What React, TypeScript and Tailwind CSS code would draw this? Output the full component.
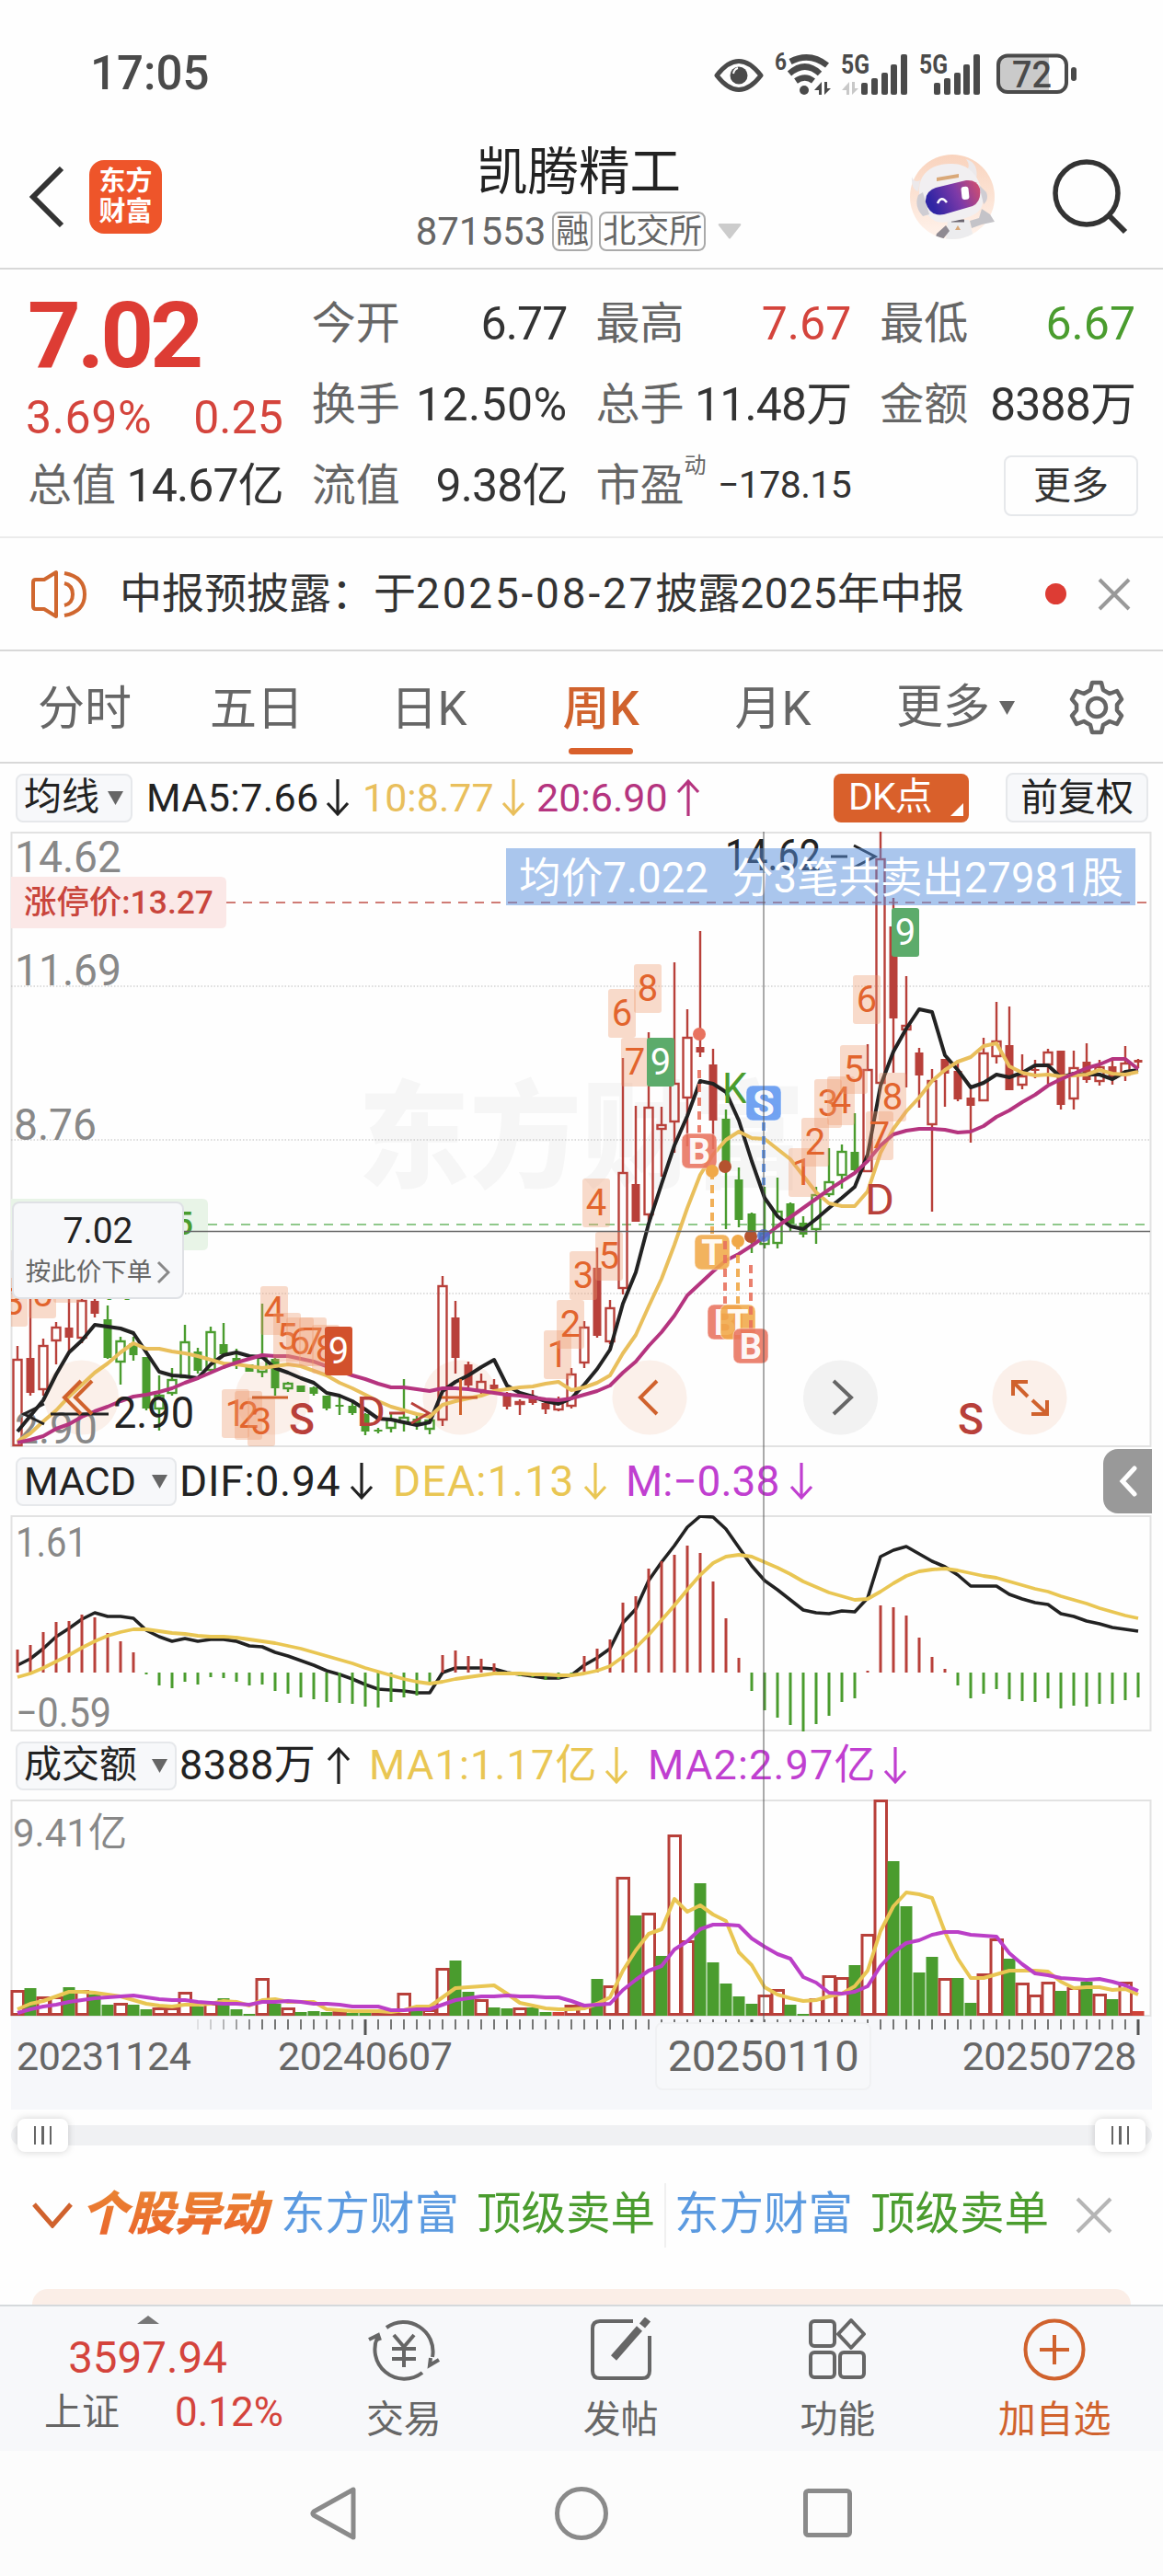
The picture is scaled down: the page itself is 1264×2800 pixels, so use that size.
import { clsx } from "clsx";
import type { ReactNode } from "react";

type CandleKind = "r" | "R" | "g" | "G";
// [high, body top, body bottom, low, kind], lower case kinds are hollow
type Candle = [number, number, number, number, CandleKind];

const RED = "#b8403a";
const GREEN = "#4a9c2e";
const YELLOW = "#e9bf5c";

const xAt = (i: number) => 19 + i * 14;

const CANDLES: Candle[] = [
	[559, 573, 668, 668, "r"], [500, 572, 610, 613, "R"], [551, 558, 607, 613, "r"],
	[533, 538, 554, 579, "r"], [500, 539, 550, 566, "R"], [500, 509, 551, 556, "r"],
	[500, 510, 524, 528, "R"], [515, 530, 572, 573, "G"], [549, 553, 577, 601, "g"],
	[549, 556, 569, 575, "G"], [571, 571, 627, 629, "G"], [591, 612, 628, 651, "g"],
	[583, 595, 611, 613, "g"], [536, 554, 594, 594, "g"], [561, 565, 586, 589, "G"],
	[538, 543, 586, 588, "g"], [534, 557, 568, 569, "G"], [562, 572, 579, 584, "G"],
	[579, 579, 587, 587, "G"], [513, 571, 588, 593, "g"], [571, 573, 605, 613, "G"],
	[598, 599, 606, 609, "g"], [602, 602, 609, 609, "G"], [603, 604, 611, 613, "G"],
	[613, 613, 627, 629, "G"], [614, 623, 624, 634, "G"], [619, 624, 632, 634, "G"],
	[632, 633, 652, 656, "G"], [648, 650, 652, 654, "G"], [633, 638, 649, 653, "g"],
	[595, 636, 643, 652, "g"], [633, 638, 646, 650, "G"], [639, 639, 650, 655, "g"],
	[483, 493, 640, 646, "r"], [510, 528, 572, 589, "R"], [576, 579, 602, 604, "R"],
	[589, 597, 608, 611, "r"], [595, 601, 606, 609, "R"], [609, 610, 625, 628, "R"],
	[617, 619, 623, 634, "r"], [607, 616, 621, 623, "R"], [620, 621, 628, 633, "R"],
	[614, 619, 629, 630, "r"], [583, 589, 625, 627, "r"], [532, 538, 578, 583, "r"],
	[452, 474, 548, 550, "R"], [509, 517, 555, 557, "r"], [246, 370, 497, 503, "r"],
	[298, 383, 424, 424, "R"], [218, 299, 417, 423, "r"], [299, 318, 324, 375, "r"],
	[142, 273, 316, 349, "r"], [193, 223, 290, 342, "r"], [108, 234, 240, 245, "R"],
	[236, 253, 314, 345, "R"], [302, 312, 360, 432, "G"], [365, 378, 422, 430, "G"],
	[414, 415, 446, 458, "G"], [386, 436, 449, 453, "g"], [376, 412, 448, 453, "g"],
	[403, 404, 426, 435, "G"], [418, 425, 438, 441, "G"], [386, 394, 433, 448, "g"],
	[344, 380, 395, 397, "g"], [340, 347, 374, 388, "g"], [306, 348, 368, 369, "G"],
	[231, 258, 370, 370, "r"], [0, 29, 274, 274, "r"], [72, 103, 203, 262, "R"],
	[157, 210, 216, 278, "r"], [235, 240, 265, 300, "R"], [258, 270, 319, 413, "r"],
	[247, 247, 263, 299, "R"], [248, 260, 291, 293, "R"], [280, 289, 298, 338, "R"],
	[224, 240, 293, 293, "r"], [185, 227, 245, 252, "r"], [190, 232, 281, 281, "R"],
	[242, 265, 276, 280, "r"], [248, 258, 260, 268, "R"], [236, 239, 254, 274, "r"],
	[238, 238, 297, 302, "R"], [238, 256, 291, 302, "r"], [230, 250, 270, 273, "R"],
	[248, 255, 272, 276, "r"], [247, 255, 269, 275, "R"], [233, 251, 265, 271, "r"],
	[247, 248, 251, 257, "R"],
];

const MA5 = [
	652, 635, 618, 590, 566, 553, 536, 538, 540, 545, 566, 587, 591, 592, 594, 579,
	569, 566, 570, 571, 583, 588, 594, 599, 610, 613, 619, 628, 638, 639, 642, 645,
	642, 608, 598, 591, 582, 574, 602, 610, 614, 619, 622, 616, 601, 584, 563, 513,
	479, 426, 383, 341, 309, 271, 274, 283, 314, 358, 398, 418, 429, 432, 421, 409,
	398, 386, 351, 276, 239, 214, 193, 196, 243, 259, 278, 273, 264, 267, 262, 254,
	254, 267, 263, 264, 264, 269, 261, 259,
];
const MA10 = [
	663, 654, 641, 629, 614, 601, 588, 578, 566, 556, 562, 562, 565, 567, 570, 574,
	578, 579, 581, 583, 581, 579, 581, 586, 591, 599, 605, 612, 619, 625, 629, 633,
	636, 623, 619, 616, 613, 608, 606, 604, 603, 600, 598, 607, 604, 599, 591, 567,
	547, 516, 486, 449, 409, 373, 351, 335, 326, 333, 334, 345, 356, 374, 392, 404,
	407, 407, 391, 349, 323, 304, 289, 271, 259, 250, 245, 233, 230, 255, 262, 265,
	264, 266, 265, 264, 259, 263, 264, 261,
];
const MA20 = [
	664, 661, 657, 649, 644, 636, 630, 625, 619, 614, 612, 609, 605, 599, 594, 588,
	582, 577, 573, 569, 570, 570, 573, 576, 581, 586, 591, 595, 600, 604, 604, 606,
	608, 605, 605, 606, 608, 610, 612, 613, 615, 617, 618, 616, 612, 608, 602, 588,
	576, 559, 544, 526, 504, 491, 478, 466, 459, 450, 440, 429, 419, 409, 399, 389,
	380, 371, 358, 341, 329, 325, 323, 323, 324, 327, 326, 320, 310, 303, 294, 286,
	276, 269, 263, 257, 253, 247, 247, 258,
];

const MACD_BARS = [
	146, 141, 127, 116, 115, 108, 111, 128, 137, 149, 173, 185, 188, 181, 184, 176,
	177, 181, 185, 184, 191, 194, 198, 200, 203, 204, 205, 208, 209, 203, 198, 196,
	184, 152, 147, 153, 156, 161, 170, 175, 176, 179, 178, 175, 153, 145, 135, 95,
	88, 58, 50, 43, 33, 41, 72, 112, 155, 191, 212, 220, 228, 235, 227, 218, 203,
	199, 169, 98, 100, 109, 133, 154, 167, 185, 199, 194, 189, 200, 202, 203, 199,
	210, 207, 208, 205, 205, 201, 198,
];
const DIF = [
	163, 156, 145, 132, 123, 113, 106, 110, 110, 112, 125, 132, 137, 134, 137, 135,
	135, 137, 142, 143, 149, 153, 158, 163, 169, 173, 178, 184, 189, 190, 191, 193,
	193, 171, 166, 166, 166, 167, 171, 173, 175, 177, 177, 174, 163, 155, 145, 117,
	102, 71, 51, 33, 13, 1, 2, 15, 35, 55, 71, 81, 92, 103, 106, 107, 104, 105, 90,
	45, 38, 34, 42, 50, 56, 65, 77, 77, 77, 86, 91, 95, 97, 107, 110, 115, 118, 122,
	124, 126,
];
const DEA = [
	176, 172, 166, 159, 152, 144, 137, 131, 127, 124, 124, 126, 128, 129, 131, 132,
	132, 133, 135, 137, 139, 142, 145, 149, 153, 157, 161, 166, 170, 174, 178, 181,
	183, 181, 178, 176, 174, 172, 172, 172, 173, 173, 174, 174, 172, 169, 164, 154,
	144, 130, 114, 98, 81, 65, 52, 45, 43, 45, 51, 57, 64, 72, 78, 84, 88, 92, 91,
	83, 74, 66, 61, 59, 58, 60, 63, 66, 68, 72, 76, 80, 83, 88, 92, 96, 101, 105,
	109, 112,
];

const VOLUMES: [number, "r" | "R" | "G"][] = [
	[27, "r"], [30, "G"], [20, "r"], [20, "r"], [31, "G"], [27, "r"], [23, "G"], [12, "G"],
	[13, "r"], [12, "G"], [7, "G"], [8, "r"], [8, "r"], [25, "r"], [10, "G"], [13, "r"],
	[19, "G"], [7, "G"], [2, "G"], [40, "r"], [13, "G"], [8, "r"], [4, "G"], [5, "G"],
	[4, "G"], [4, "r"], [3, "G"], [3, "G"], [4, "r"], [3, "r"], [24, "r"], [5, "G"],
	[6, "r"], [51, "r"], [60, "G"], [26, "G"], [17, "r"], [9, "G"], [8, "G"], [8, "r"],
	[9, "G"], [4, "G"], [4, "R"], [11, "r"], [11, "r"], [40, "G"], [32, "r"], [150, "r"],
	[109, "G"], [111, "r"], [65, "G"], [196, "r"], [81, "r"], [144, "G"], [58, "G"], [35, "G"],
	[21, "G"], [13, "G"], [22, "r"], [28, "r"], [12, "G"], [2, "G"], [18, "r"], [43, "r"],
	[41, "r"], [55, "G"], [88, "r"], [234, "r"], [168, "G"], [119, "G"], [47, "G"], [64, "G"],
	[40, "r"], [41, "G"], [14, "G"], [45, "r"], [83, "r"], [62, "G"], [35, "r"], [22, "r"],
	[36, "r"], [27, "G"], [30, "r"], [37, "G"], [23, "r"], [18, "G"], [36, "r"], [5, "R"],
];
const VOL_MA1 = [
	228, 222, 219, 214, 209, 209, 210, 212, 214, 218, 222, 224, 225, 223, 223, 222,
	219, 220, 224, 218, 217, 220, 220, 220, 228, 229, 230, 230, 230, 231, 229, 225,
	225, 215, 205, 204, 203, 202, 211, 221, 224, 227, 228, 228, 227, 222, 215, 186,
	164, 146, 141, 108, 122, 115, 125, 132, 166, 180, 204, 212, 216, 219, 218, 214,
	211, 203, 186, 143, 116, 101, 103, 107, 144, 173, 194, 194, 190, 186, 186, 186,
	187, 198, 205, 204, 204, 207, 206, 212,
];
const VOL_MA2 = [
	232, 228, 225, 223, 220, 218, 216, 215, 214, 213, 215, 217, 218, 218, 220, 221,
	222, 222, 223, 220, 220, 219, 220, 222, 222, 223, 225, 225, 225, 229, 229, 228,
	228, 223, 218, 216, 214, 214, 213, 214, 214, 215, 215, 219, 224, 223, 222, 207,
	196, 186, 181, 163, 154, 141, 136, 136, 137, 151, 160, 168, 173, 193, 199, 210,
	211, 209, 203, 181, 166, 156, 153, 147, 144, 144, 147, 148, 149, 167, 179, 189,
	191, 194, 195, 196, 195, 198, 202, 208,
];

// nine-turn counters: [x, y, digit, solid background]
const COUNTERS: [number, number, string, string?][] = [
	[0, 485, "3"], [31, 476, "5"], [58, 459, "6"],
	[283, 494, "4"], [297, 523, "5"], [311, 528, "6"], [325, 528, "7"], [339, 536, "8"],
	[353, 538, "9", "#d2512c"],
	[241, 606, "1"], [255, 608, "2"], [269, 615, "3"],
	[591, 542, "1"], [605, 509, "2"], [619, 456, "3"], [633, 377, "4"], [647, 435, "5"],
	[661, 171, "6"], [675, 224, "7"], [689, 144, "8"], [703, 224, "9", "#5cab6b"],
	[857, 344, "1"], [871, 311, "2"], [885, 269, "3"], [899, 266, "4"], [913, 232, "5"],
	[927, 156, "6"], [941, 304, "7"], [955, 262, "8"], [969, 83, "9", "#5cab6b"],
];

const TRADES = [
	{ x: 760, from: 259, to: 327, badge: 347, label: "B", color: "#e8735f" },
	{ x: 774, from: 369, to: 437, badge: 457, label: "T", color: "#f0a848" },
	{ x: 788, from: 445, to: 513, badge: 533, label: "B", color: "#e8735f" },
	{ x: 802, from: 445, to: 513, badge: 533, label: "T", color: "#f0a848" },
	{ x: 816, from: 471, to: 540, badge: 559, label: "B", color: "#e8735f" },
	{ x: 830, from: 316, to: 384, badge: 295, label: "S", color: "#5f96f0" },
];

function Series({ data, color, width = 4 }: { data: number[]; color: string; width?: number }) {
	return (
		<polyline
			points={data.map((y, i) => `${xAt(i)},${y}`).join(" ")}
			fill="none"
			stroke={color}
			strokeWidth={width}
			strokeLinejoin="round"
		/>
	);
}

function Label({
	x,
	y,
	w,
	size,
	color,
	weight = 400,
	children,
}: {
	x: number;
	y: number;
	w?: number;
	size: number;
	color: string;
	weight?: number;
	children: string;
}) {
	return (
		<text
			x={x}
			y={y}
			fill={color}
			fontSize={size}
			fontWeight={weight}
			textLength={w}
			lengthAdjust="spacingAndGlyphs"
			xmlSpace="preserve"
		>
			{children}
		</text>
	);
}

function CandleShape({ i, candle }: { i: number; candle: Candle }) {
	const [high, top, bottom, low, kind] = candle;
	const x = xAt(i);
	const color = kind.toLowerCase() === "r" ? RED : GREEN;
	const hollow = kind === "r" || kind === "g";
	return (
		<g stroke={color} strokeWidth="2.4">
			<path d={`M${x} ${high}V${top}M${x} ${bottom}V${low}`} />
			{hollow ? (
				<rect x={x - 4.5} y={top + 1} width="9" height={Math.max(bottom - top - 2, 1)} fill="none" />
			) : (
				<rect x={x - 4.5} y={top} width="9" height={Math.max(bottom - top, 2)} fill={color} stroke="none" />
			)}
		</g>
	);
}

function Arrow({ up, className }: { up?: boolean; className?: string }) {
	return (
		<svg viewBox="0 0 26 42" className={clsx("h-[42px] w-[26px] shrink-0", up && "rotate-180", className)}>
			<path d="M13 1v38M2 27l11 12 11-12" fill="none" stroke="currentColor" strokeWidth="3.2" />
		</svg>
	);
}

function Reading({ children, up, className }: { children: string; up?: boolean; className: string }) {
	return (
		<div className={clsx("flex shrink-0 items-center justify-between", className)}>
			<span className="whitespace-nowrap">{children}</span>
			<Arrow up={up} />
		</div>
	);
}

function Picker({ children, className }: { children: string; className?: string }) {
	return (
		<button
			type="button"
			className={clsx(
				"ml-[17px] flex h-[53px] shrink-0 items-center justify-between rounded-lg border-2 border-[#e6e8eb] bg-[#f7f8fa] pr-2 pl-[7px] whitespace-nowrap text-[#222]",
				className,
			)}
		>
			{children}
			<svg viewBox="0 0 17 15" className="h-[15px] w-[17px]">
				<path d="M0 0h17L8.500 15z" fill="#666" />
			</svg>
		</button>
	);
}

function StatusBar() {
	return (
		<div className="flex h-[150px] items-start justify-between pt-[52px] pr-[92px] pl-[98px] text-[#4a4a4a]">
			<span className="text-[51px] leading-[56px] font-medium">17:05</span>
			<svg viewBox="776 50 396 56" className="h-[56px] w-[396px]" fill="#4a4a4a">
				<path d="M779 80q24-31 48 0q-24 31-48 0z" fill="none" stroke="#4a4a4a" strokeWidth="5" strokeLinejoin="round" />
				<circle cx="803" cy="80" r="9.500" />
				<path d="M797 78q1-5 5-6" stroke="#fff" strokeWidth="2" fill="none" />
				<text x="842" y="74" fontSize="25" fontWeight="700" textLength="13" lengthAdjust="spacingAndGlyphs">6</text>
				<g fill="none" stroke="#4a4a4a" strokeWidth="6.500">
					<path d="M859 65q21-11 40 4" />
					<path d="M858 78q17-15 33 0" />
					<path d="M865 86q10-7 19 0" />
				</g>
				<circle cx="874" cy="96" r="5" />
				<path d="M885 96l8-9v14h-3v-5zM896 87v14l7-7h-4v-7z" />
				<text x="914" y="78" fontSize="29" fontWeight="700" textLength="31" lengthAdjust="spacingAndGlyphs">5G</text>
				<path d="M915 96l8-9v14h-3v-5zM926 87v14l7-7h-4v-7z" fill="#c8c8c8" />
				<rect x="936" y="88" width="7" height="13" rx="2" />
				<rect x="947" y="83" width="7" height="18" rx="2" />
				<rect x="958" y="77" width="7" height="24" rx="2" />
				<rect x="968" y="68" width="7" height="33" rx="2" />
				<rect x="979" y="57" width="7" height="44" rx="2" />
				<text x="999" y="78" fontSize="29" fontWeight="700" textLength="31" lengthAdjust="spacingAndGlyphs">5G</text>
				<rect x="1015" y="88" width="7" height="13" rx="2" />
				<rect x="1026" y="83" width="7" height="18" rx="2" />
				<rect x="1037" y="77" width="7" height="24" rx="2" />
				<rect x="1047" y="68" width="7" height="33" rx="2" />
				<rect x="1058" y="57" width="7" height="44" rx="2" />
				<path d="M1093 58h47v40h-47q-10 0-10-10V68q0-10 10-10z" fill="#cacaca" />
				<rect x="1085" y="58.500" width="74" height="39.500" rx="10" fill="none" stroke="#4a4a4a" strokeWidth="4" />
				<rect x="1164" y="71" width="6" height="15" rx="3" />
				<text x="1100" y="93" fontSize="40" fontWeight="500" textLength="43" lengthAdjust="spacingAndGlyphs">72</text>
			</svg>
		</div>
	);
}

function Assistant() {
	return (
		<svg viewBox="0 0 94 94" className="h-[94px] w-[94px]">
			<defs>
				<linearGradient id="halo" x1="0" y1="0" x2="0" y2="1">
					<stop offset="0" stopColor="#f9d3bd" />
					<stop offset="1" stopColor="#fff3ec" />
				</linearGradient>
				<linearGradient id="visor" x1="0" y1="0.3" x2="1" y2="0">
					<stop offset="0" stopColor="#2f25a4" />
					<stop offset="0.5" stopColor="#7d3aa8" />
					<stop offset="1" stopColor="#d9506a" />
				</linearGradient>
				<clipPath id="halo-clip">
					<path d="M1 47a46 46 0 0 1 92 0 46 46 0 0 1-92 0z" />
				</clipPath>
			</defs>
			<circle cx="47" cy="47" r="46" fill="url(#halo)" />
			<g clipPath="url(#halo-clip)">
				<path d="M42 72h23l6 22H40z" fill="#ececee" />
				<path d="M40 78l-10 9-2 7h8l8-10z" fill="#8f8a92" />
				<path d="M46 73h14" stroke="#6b6670" strokeWidth="3" />
				<path d="M50 83l3-5 3 5z" fill="#d9a878" />
			</g>
			<path d="M66 73l10-3 3-10 9 6 5 8-14 3-11 4z" fill="#c4c3c8" />
			<path d="M3 25q2 7 9 4l-2 12q-8-2-7-16zM62 6q14 4 11 22l-12-8q7-6 1-14z" fill="#ece9eb" />
			<path d="M11 38C12 18 30 10 47 11c17 0 28 12 32 29 4 16-1 24-12 28-13 5-32 9-39 5-10-5-18-20-17-35z" fill="#f1eff1" />
			<path d="M10 45q-5 12 5 23l7-2-7-24zM76 34l8 8q3 8-3 13z" fill="#cfcdd3" />
			<path d="M18 53q-1-12 11-16l33-8q12-1 15 9 2 14-8 19L38 66q-15 3-20-13z" fill="url(#visor)" />
			<path d="M31 54q4-9 10-1" stroke="#fff" strokeWidth="2.500" fill="none" />
			<rect x="57" y="36" width="8" height="14" rx="3" fill="#fff" transform="rotate(-6 60 43)" />
			<path d="M30 26l24-4v4l-24 4z" fill="#d9a878" />
		</svg>
	);
}

function Header() {
	return (
		<header className="flex h-[143px] items-center justify-between border-b-2 border-[#d8d8d8] pr-[38px] pb-[14px] pl-[30px]">
			<div className="flex w-[290px] items-center gap-[25px]">
				<svg viewBox="0 0 42 66" className="h-[66px] w-[42px]">
					<path d="M37 2L6 33l31 31" fill="none" stroke="#333" strokeWidth="6" />
				</svg>
				<div className="flex h-[80px] w-[79px] flex-col items-center justify-center rounded-2xl bg-[#ee552a] text-[29px] leading-[33px] font-bold text-white">
					<span>东方</span>
					<span>财富</span>
				</div>
			</div>
			<div className="flex flex-col items-center pt-[9px] pl-[2px]">
				<h1 className="text-[55.500px] leading-[65px] text-[#222]">凯腾精工</h1>
				<div className="flex h-[62px] items-center pt-[2px] text-[#666]">
					<span className="text-[42px]">871553</span>
					<span className="ml-[7px] flex h-[43px] items-center rounded-lg border-2 border-[#aaa] px-[2px] text-[36px]">融</span>
					<span className="ml-[7px] flex h-[43px] items-center rounded-lg border-2 border-[#aaa] px-[2px] text-[36px]">北交所</span>
					<svg viewBox="0 0 26 17" className="ml-[13px] h-[17px] w-[26px]">
						<path d="M2 0h22q2 0 1 2L14 16q-1 1-2 0L1 2q-1-2 1-2z" fill="#ccc" />
					</svg>
				</div>
			</div>
			<div className="flex w-[290px] items-center justify-end gap-[62px]">
				<Assistant />
				<svg viewBox="0 0 82 82" className="h-[82px] w-[82px]">
					<circle cx="37" cy="37" r="34" fill="none" stroke="#333" strokeWidth="5.500" />
					<path d="M61 61l18 18" stroke="#333" strokeWidth="6" />
				</svg>
			</div>
		</header>
	);
}

function Stat({
	label,
	value,
	className = "tracking-[-0.9px] text-[#333]",
}: {
	label: string;
	value: string;
	className?: string;
}) {
	return (
		<div className="flex h-[88px] items-center justify-between whitespace-nowrap">
			<span className="text-[48px] text-[#666]">{label}</span>
			<span className={clsx("text-[50px]", className)}>{value}</span>
		</div>
	);
}

function Quote() {
	return (
		<section className="grid h-[292px] grid-cols-4 content-start gap-x-[31px] border-b-2 border-[#ebebeb] px-[30px] pt-[15px]">
			<div className="row-span-2 flex flex-col">
				<span className="mt-[8px] text-[101px] leading-[98px] font-bold tracking-[-4px] text-[#dd3c34]">7.02</span>
				<div className="mt-[12px] -ml-[2px] flex justify-between text-[50px] leading-[56px] text-[#d4443c]">
					<span className="tracking-[0.6px]">3.69%</span>
					<span>0.25</span>
				</div>
			</div>
			<Stat label="今开" value="6.77" />
			<Stat label="最高" value="7.67" className="text-[#d4443c]" />
			<Stat label="最低" value="6.67" className="text-[#4a9c2e]" />
			<Stat label="换手" value="12.50%" className="tracking-[0.4px] text-[#333]" />
			<Stat label="总手" value="11.48万" />
			<Stat label="金额" value="8388万" />
			<Stat label="总值" value="14.67亿" />
			<Stat label="流值" value="9.38亿" />
			<div className="flex h-[88px] items-center whitespace-nowrap text-[#666]">
				<span className="text-[48px]">市盈</span>
				<span className="mb-[44px] text-[24px]">动</span>
				<span className="ml-auto text-[41px] tracking-[-0.6px] text-[#333]">−178.15</span>
			</div>
			<div className="flex h-[88px] items-center justify-end">
				<button
					type="button"
					className="mr-[-3px] h-[66px] w-[146px] rounded-lg border-2 border-[#e6e8eb] text-[41px] leading-none text-[#333]"
				>
					更多
				</button>
			</div>
		</section>
	);
}

function Notice() {
	return (
		<section className="flex h-[123px] items-center border-b-2 border-[#d8d8d8] pl-[33px]">
			<svg viewBox="0 0 62 54" className="h-[54px] w-[62px]" fill="none" stroke="#d0672f" strokeWidth="4">
				<path d="M3 14q0-3 3-3h9L28 3v48L15 43H6q-3 0-3-3z" strokeLinejoin="round" />
				<path d="M37 15q9 2 9 12t-9 12M37 4q22 4 22 23T37 50" />
			</svg>
			<p className="ml-[35px] w-[924px] text-[46px] whitespace-nowrap text-[#333]">
				中报预披露：于<span className="tracking-[2.800px]">2025-08-27</span>披露
				<span className="tracking-[0.6px]">2025</span>年中报
			</p>
			<span className="ml-[82px] size-[23px] rounded-full bg-[#dd3c34]" />
			<svg viewBox="0 0 36 36" className="ml-[34px] size-[36px]">
				<path d="M2 2l32 32M34 2L2 34" stroke="#999" strokeWidth="4" />
			</svg>
		</section>
	);
}

const TABS = ["分时", "五日", "日K", "周K", "月K"];

function Tabs() {
	return (
		<nav className="flex h-[122px] border-b-2 border-[#d8d8d8] text-[51px] text-[#666]">
			{TABS.map((tab) => (
				<div
					key={tab}
					className={clsx("flex w-[187px] flex-col items-center pr-[3px]", tab === "周K" && "font-medium text-[#d0622d]")}
				>
					<span className="mt-[28px] leading-[70px]">{tab}</span>
					{tab === "周K" && <span className="mt-[7px] h-[7px] w-[70px] rounded-full bg-[#d9602b]" />}
				</div>
			))}
			<div className="flex h-[122px] w-[210px] items-center justify-center gap-[10px] pr-[3px]">
				<span>更多</span>
				<svg viewBox="0 0 17 15" className="h-[15px] w-[17px]">
					<path d="M0 0h17L8.500 15z" fill="#666" />
				</svg>
			</div>
			<div className="flex h-[122px] w-[94px] items-center justify-center">
				<svg viewBox="0 0 60 60" className="size-[60px]" fill="none" stroke="#666" strokeWidth="4.500" strokeLinejoin="round">
					<path d="M25 3h10l2 8 7 4 8-3 5 9-5 6v6l5 6-5 9-8-3-7 4-2 8H25l-2-8-7-4-8 3-5-9 5-6v-6l-5-6 5-9 8 3 7-4z" />
					<circle cx="30" cy="30" r="10" />
				</svg>
			</div>
		</nav>
	);
}

function MainChart() {
	return (
		<div className="relative h-[669px]">
			<svg viewBox="0 0 1264 669" className="h-[669px] w-[1264px]">
				<defs>
					<clipPath id="main-clip">
						<rect x="12" y="0" width="1240" height="669" />
					</clipPath>
				</defs>
				<Label x={389} y={377} w={486} size={126} color="#f6f6f6" weight={900}>东方财富</Label>
				<rect x="12.500" y="1" width="1238" height="667" fill="none" stroke="#e2e2e2" strokeWidth="2" />
				{[168, 335, 502].map((y) => (
					<path key={y} d={`M12 ${y}H1250`} stroke="#bbb" strokeWidth="1.200" strokeDasharray="1.500 2" />
				))}
				<Label x={16} y={44} w={116} size={48} color="#888">14.62</Label>
				<Label x={16} y={167} w={116} size={48} color="#888">11.69</Label>
				<Label x={15} y={335} w={90} size={48} color="#888">8.76</Label>
				<path d="M12 49h228q6 0 6 6v44q0 6-6 6H12z" fill="#fbe8e7" />
				<Label x={26} y={89} w={206} size={35} color="#c9453c" weight={500}>涨停价:13.27</Label>
				<path d="M246 77H1247" stroke="#cf7b75" strokeWidth="2.200" strokeDasharray="10 8" />
				<path d="M12 399h208q6 0 6 6v44q0 6-6 6H12z" fill="#e8f4e7" />
				<Label x={190} y={438} w={20} size={35} color={GREEN} weight={500}>5</Label>
				<path d="M226 427H1247" stroke="#8fc88b" strokeWidth="2.200" strokeDasharray="10 8" />

				{[88.5, 296, 500, 706, 913.5, 1119].map((cx) => (
					<circle key={cx} cx={cx} cy="615" r="40.500" fill={cx === 913.5 ? "#f2f2f2" : "#fbf0ea"} />
				))}

				<g clipPath="url(#main-clip)">
					{CANDLES.map((candle, i) => (
						<CandleShape key={i} i={i} candle={candle} />
					))}
					<Label x={16} y={665} w={90} size={48} color="#888">2.90</Label>
					<Label x={788} y={42} w={104} size={48} color="#222">14.62</Label>
					<path d="M903 27h18M928 15l23 12-23 12" fill="none" stroke="#222" strokeWidth="3" />
					<Series data={MA5} color="#222" />
					<Series data={MA10} color={YELLOW} />
					<Series data={MA20} color="#b5347f" />

					{COUNTERS.map(([x, y, digit, solid]) => (
						<g key={`${x}-${y}`}>
							<rect x={x} y={y} width="30" height="53" rx="3" fill={solid ?? "#ee9c70"} fillOpacity={solid ? 1 : 0.36} />
							<text x={x + 15} y={y + 40} textAnchor="middle" fontSize="40" fill={solid ? "#fff" : "#e2642d"}>
								{digit}
							</text>
						</g>
					))}
				</g>

				<Label x={113} y={509} w={28} size={47} color={GREEN}>K</Label>
				<Label x={785} y={295} w={27} size={47} color={GREEN}>K</Label>
				<Label x={940} y={416} w={32} size={46} color={RED}>D</Label>
				<Label x={387} y={646} w={32} size={44} color={RED}>D</Label>
				<path d="M423 632h17M447 621l19 11-19 11" fill="none" stroke={RED} strokeWidth="3" />
				<Label x={314} y={655} w={28} size={48} color={RED} weight={500}>S</Label>
				<Label x={1041} y={655} w={28} size={48} color={RED} weight={500}>S</Label>
				<Label x={123} y={648} w={88} size={48} color="#222">2.90</Label>
				<path d="M55 633h63M48 622l-22 11 22 11" fill="none" stroke="#222" strokeWidth="3" />

				<g fill="none" stroke="#d0622d" strokeWidth="4">
					<path d="M88 597L70 615l18 18M100 597L82 615l18 18" />
					<path d="M274 615h39M480 615h39M500.500 595v39" strokeWidth="3" />
					<path d="M714 597l-18 18 18 18" />
					<path d="M1101 613v-15h16M1102 599l15 15M1121 633h17v-15M1137 632l-15-14" />
					<path d="M906 597l19 18-19 18" stroke="#666" />
				</g>

				{TRADES.map((t) => (
					<g key={t.x}>
						<path d={`M${t.x} ${t.from}V${t.to}`} stroke={t.color} strokeWidth="4" strokeDasharray="9 6" opacity="0.9" />
						<rect
							x={t.x - 19}
							y={t.badge - 19}
							width="38"
							height="38"
							rx="7"
							fill={t.color}
							fillOpacity="0.88"
							stroke="#fff"
							strokeOpacity="0.5"
						/>
						<text x={t.x} y={t.badge + 14} textAnchor="middle" fontSize="38" fontWeight="700" fill="#fff" fillOpacity="0.95">
							{t.label}
						</text>
					</g>
				))}
				<circle cx="760" cy="220" r="7" fill="#e8735f" />
				<circle cx="774" cy="369" r="7" fill="#f0a848" />
				<circle cx="788" cy="364" r="7" fill="#b4532f" />
				<circle cx="802" cy="445" r="7" fill="#f0a848" />
				<circle cx="816" cy="440" r="7" fill="#b4532f" />
				<circle cx="830" cy="439" r="7" fill="#4a70d0" fillOpacity="0.85" />

				<path d="M199 434.500H1250" stroke="#666" strokeWidth="1.500" />
				<rect x="550" y="18" width="684" height="62" fill="#558ddb" fillOpacity="0.500" />
				<Label x={564} y={66} w={206} size={46} color="#fff">均价7.022</Label>
				<Label x={795} y={66} w={426} size={46} color="#fff">分3笔共卖出27981股</Label>
			</svg>
			<div className="absolute top-[402px] left-[13px] flex h-[106px] w-[187px] flex-col items-center rounded-lg border-2 border-[#dfe1e5] bg-[#f7f8fa]">
				<span className="mt-[4px] text-[39px] leading-[52px] text-[#222]">7.02</span>
				<span className="flex items-center gap-[5px] text-[27.500px] leading-[38px] text-[#666]">
					按此价下单
					<svg viewBox="0 0 15 26" className="h-[26px] w-[15px]">
						<path d="M2 2l11 11L2 24" fill="none" stroke="#888" strokeWidth="3" />
					</svg>
				</span>
			</div>
		</div>
	);
}

function MacdChart() {
	return (
		<svg viewBox="0 0 1264 235" className="h-[235px] w-[1264px]">
			<rect x="12.500" y="1" width="1238" height="233" fill="none" stroke="#e2e2e2" strokeWidth="2" />
			<Label x={17} y={45} w={78} size={44} color="#888">1.61</Label>
			<Label x={17} y={230} w={104} size={44} color="#888">−0.59</Label>
			<Series data={DIF} color="#222" width={3.6} />
			{MACD_BARS.map((y, i) => (
				<path key={i} d={`M${xAt(i)} 171V${y}`} stroke={y < 171 ? RED : GREEN} strokeWidth="3" />
			))}
			<Series data={DEA} color="#e9c653" width={3.8} />
		</svg>
	);
}

function VolumeChart() {
	return (
		<svg viewBox="0 0 1264 236" className="h-[236px] w-[1264px]">
			<rect x="12.500" y="1" width="1238" height="234" fill="none" stroke="#e2e2e2" strokeWidth="2" />
			<Label x={14} y={51} w={124} size={43} color="#888">9.41亿</Label>
			{VOLUMES.map(([h, kind], i) =>
				kind === "r" ? (
					<rect
						key={i}
						x={xAt(i) - 6}
						y={235.5 - h}
						width="12.500"
						height={Math.max(h - 2, 1)}
						fill="#fff"
						stroke={RED}
						strokeWidth="3"
					/>
				) : (
					<rect key={i} x={xAt(i) - 6.5} y={235 - h} width="13" height={h} fill={kind === "G" ? GREEN : "#d04238"} />
				),
			)}
			<Series data={VOL_MA1} color="#e9c653" />
			<Series data={VOL_MA2} color="#bb3fc7" />
		</svg>
	);
}

function TimeAxis() {
	return (
		<div className="mx-[12px] h-[101px] bg-[#f6f7fa] text-[43px] text-[#666]">
			<svg viewBox="12 0 1240 22" className="h-[22px] w-[1240px]">
				{Array.from({ length: 74 }, (_, k) => k + 14).map((i) => (
					<path
						key={i}
						d={`M${xAt(i)} 3V${i === 27 || i === 87 ? 20 : i > 49 && i < 67 ? 7 : 14}`}
						stroke="#555"
						strokeWidth={i === 27 || i === 57 || i === 87 ? 3 : 1.6}
						opacity={Math.min(1, (i - 13) / 6)}
					/>
				))}
			</svg>
			<div className="flex h-[42px] items-center tracking-[-0.5px]">
				<span className="ml-[6px] w-[284px]">20231124</span>
				<span className="w-[410px]">20240607</span>
				<span className="flex h-[74px] w-[235px] items-center justify-center rounded-lg border-2 border-[#f0f1f3] bg-[#f7f8fa] text-[47px]">
					20250110
				</span>
				<span className="mr-[17px] ml-auto">20250728</span>
			</div>
		</div>
	);
}

function Grip() {
	return (
		<div className="flex h-[36px] w-[55px] items-center justify-center gap-[6px] rounded-lg bg-white shadow-[0_0_8px_rgba(0,0,0,0.18)]">
			<i className="h-[20px] w-[2.500px] bg-[#666]" />
			<i className="h-[20px] w-[2.500px] bg-[#666]" />
			<i className="h-[20px] w-[2.500px] bg-[#666]" />
		</div>
	);
}

function ChartArea() {
	return (
		<section className="relative">
			<div className="flex h-[74px] items-center text-[43px]">
				<Picker className="w-[127px] text-[41px]">均线</Picker>
				<Reading className="ml-[15px] w-[221px] tracking-[0.4px] text-[#222]">MA5:7.66</Reading>
				<Reading className="ml-[14px] w-[177px] text-[#e9bf5c]">10:8.77</Reading>
				<Reading up className="ml-[12px] w-[178px] text-[#b5347f]">20:6.90</Reading>
				<div className="ml-auto flex h-[53px] w-[147px] items-center justify-between rounded-lg bg-[#d9602b] pr-[6px] pl-[16px] text-[41px] tracking-[-1px] text-white">
					DK点
					<svg viewBox="0 0 14 14" className="mt-[26px] size-[14px]">
						<path d="M14 0v14H0z" fill="#fff" />
					</svg>
				</div>
				<button
					type="button"
					className="mr-[16px] ml-[40px] h-[54px] w-[155px] rounded-lg border-2 border-[#e6e8eb] bg-[#f7f8fa] text-[41px] leading-none whitespace-nowrap text-[#222]"
				>
					前复权
				</button>
			</div>
			<MainChart />
			<div className="flex h-[74px] items-center text-[46px]">
				<Picker className="w-[175px] text-[43px]">MACD</Picker>
				<Reading className="ml-[3px] w-[211px] tracking-[0.8px] text-[#222]">DIF:0.94</Reading>
				<Reading className="ml-[21px] w-[233px] tracking-[1.300px] text-[#e9c653]">DEA:1.13</Reading>
				<Reading className="ml-[20px] w-[204px] text-[#c03fd0]">M:−0.38</Reading>
				<div className="mr-[12px] ml-auto flex h-[70px] w-[53px] items-center justify-center rounded-l-2xl bg-[#999]">
					<svg viewBox="0 0 20 34" className="h-[34px] w-[20px]">
						<path d="M17 3L4 17l13 14" fill="none" stroke="#fff" strokeWidth="5" strokeLinecap="round" />
					</svg>
				</div>
			</div>
			<MacdChart />
			<div className="flex h-[74px] items-center text-[45px]">
				<Picker className="w-[175px] text-[41px]">成交额</Picker>
				<Reading up className="ml-[3px] w-[186px] tracking-[0.4px] text-[#222]">8388万</Reading>
				<Reading className="ml-[20px] w-[282px] tracking-[1.200px] text-[#e9c653]">MA1:1.17亿</Reading>
				<Reading className="ml-[21px] w-[282px] tracking-[1.200px] text-[#c03fd0]">MA2:2.97亿</Reading>
			</div>
			<VolumeChart />
			<TimeAxis />
			<div className="absolute top-[74px] left-[829px] h-[1294px] w-[2px] bg-[#555]/50" />
			<div className="flex h-[58px] items-center pb-[3px]">
				<div className="mx-[12px] flex h-[22px] w-[1240px] items-center justify-between rounded-full bg-[#f0f1f3] px-[7px]">
					<Grip />
					<Grip />
				</div>
			</div>
		</section>
	);
}

function Movers() {
	return (
		<section className="flex h-[113px] items-center text-[48.500px] whitespace-nowrap">
			<svg viewBox="0 0 44 28" className="ml-[35px] h-[28px] w-[44px]">
				<path d="M2 2l20 23L42 2" fill="none" stroke="#d0622d" strokeWidth="5" />
			</svg>
			<span className="ml-[9px] w-[217px] bg-linear-to-b from-[#e98a34] to-[#ea5a2a] bg-clip-text text-[51px] font-black tracking-[-0.5px] text-transparent italic">
				个股异动
			</span>
			<span className="w-[213px] text-[#5b9ae0]">东方财富</span>
			<span className="w-[204px] text-[#4a9c2e]">顶级卖单</span>
			<span className="h-[70px] w-[2px] bg-[#f0f0f0]" />
			<span className="ml-[9px] w-[213px] text-[#5b9ae0]">东方财富</span>
			<span className="w-[223px] text-[#4a9c2e]">顶级卖单</span>
			<svg viewBox="0 0 40 40" className="size-[40px]">
				<path d="M2 2l36 36M38 2L2 38" stroke="#b5b5b5" strokeWidth="4" />
			</svg>
		</section>
	);
}

function NavItem({ label, className, children }: { label: string; className?: string; children: ReactNode }) {
	return (
		<div className={clsx("flex w-[236px] flex-col items-center pt-[12px]", className)}>
			<svg viewBox="0 0 80 70" className="h-[70px] w-[80px]" fill="none" stroke="currentColor" strokeWidth="4">
				{children}
			</svg>
			<span className="mt-[13px] text-[41px] leading-[56px]">{label}</span>
		</div>
	);
}

function BottomNav() {
	return (
		<footer className="flex h-[159px] border-t-2 border-[#d5d9dc] bg-[#f7f8fa] text-[#666]">
			<div className="flex w-[321px] flex-col items-center">
				<svg viewBox="0 0 24 9" className="mt-[10px] h-[9px] w-[24px]">
					<path d="M12 0l12 9H0z" fill="#777" />
				</svg>
				<span className="mt-[9px] text-[47.500px] leading-[56px] text-[#d4443c]">3597.94</span>
				<div className="mt-[3px] flex w-[321px] justify-between pr-[13px] pl-[48px] text-[41px] leading-[56px]">
					<span>上证</span>
					<span className="text-[44px] text-[#d4443c]">0.12%</span>
				</div>
			</div>
			<NavItem label="交易">
				<path d="M21 11A32 32 0 0 1 71 43M60 60A32 32 0 0 1 12 20M2 24l10-5 2 6M78 46l-10 6 1-8" />
				<path d="M29 19l11 13 11-13M27 34h26M27 45h26M40 32v22" />
			</NavItem>
			<NavItem label="发帖">
				<path d="M53 4H17q-8 0-8 8v46q0 8 8 8h46q8 0 8-8V20" />
				<path d="M32 44l28-32M63 9l6-7" strokeWidth="8" />
			</NavItem>
			<NavItem label="功能">
				<rect x="11" y="4" width="26" height="27" rx="4" />
				<path d="M55 3l14 15-14 15-14-15z" strokeLinejoin="round" />
				<rect x="11" y="38" width="26" height="27" rx="4" />
				<rect x="43" y="38" width="26" height="27" rx="4" />
			</NavItem>
			<NavItem label="加自选" className="text-[#d0622d]">
				<circle cx="40" cy="35" r="31.500" />
				<path d="M24 35h32M40 19v32" />
			</NavItem>
		</footer>
	);
}

function SystemNav() {
	return (
		<div className="flex h-[136px] items-center justify-center bg-[#fcfcfc]">
			<svg viewBox="332 0 600 60" className="h-[60px] w-[600px]" fill="none" stroke="#8a8a8a" strokeWidth="5">
				<path d="M384 4v52L341 32q-2-2 0-4z" strokeLinejoin="round" />
				<circle cx="632" cy="30" r="26.500" />
				<rect x="875.500" y="5.500" width="48" height="48" rx="3" />
			</svg>
		</div>
	);
}

export default function App() {
	return (
		<div className="flex h-[2800px] w-[1264px] flex-col overflow-hidden bg-[#fefefe] font-[Roboto,'Noto_Sans_CJK_SC',sans-serif]">
			<StatusBar />
			<Header />
			<Quote />
			<Notice />
			<Tabs />
			<ChartArea />
			<div className="flex h-[154px] flex-col justify-between">
				<Movers />
				<div className="mx-[35px] h-[17px] rounded-t-[40px] bg-[#fbeee7]" />
			</div>
			<BottomNav />
			<SystemNav />
		</div>
	);
}
